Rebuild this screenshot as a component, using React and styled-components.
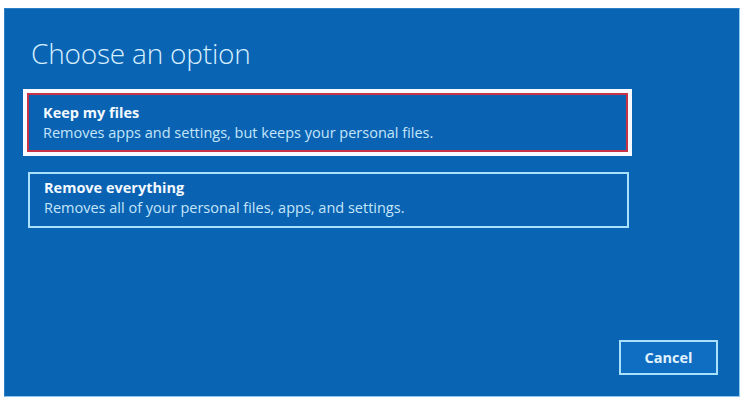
import React from 'react';
import styled, { createGlobalStyle } from 'styled-components';

const GlobalStyle = createGlobalStyle`
  html, body {
    margin: 0;
    background: #ffffff;
  }
  body {
    font-family: "Open Sans", "Noto Sans", "Liberation Sans", sans-serif;
  }
`;

const Page = styled.div`
  box-sizing: border-box;
  width: 743px;
  height: 401px;
  padding: 8px 3px 4px 4px;
`;

const Panel = styled.div`
  box-sizing: border-box;
  width: 736px;
  height: 389px;
  background: #0a64b4;
  border: 1px solid #8ccaf0;
  border-left-color: #2f7fc6;
  border-top-color: #2f7fc6;
  display: flex;
  flex-direction: column;
  padding: 0 21px 21px 22px;
`;

const Title = styled.h1`
  margin: 28px 0 0 4px;
  font-size: 28px;
  line-height: 32px;
  font-weight: 300;
  color: #d6efff;
  letter-spacing: -0.2px;
`;

const Options = styled.div`
  display: flex;
  flex-direction: column;
  gap: 20px;
  margin-top: 24px;
`;

const Option = styled.button`
  box-sizing: border-box;
  width: 601px;
  margin-left: ${p => (p.$selected ? '0' : '1px')};
  padding: ${p => (p.$selected ? '8px 0 7px 14px' : '4px 0 8px 14px')};
  background: #0a62b2;
  border: ${p => (p.$selected ? '2px solid #c63346' : '2px solid #a9e0fb')};
  box-shadow: ${p => (p.$selected ? '0 0 0 4px #f7fbff' : 'none')};
  text-align: left;
  font-family: inherit;
  cursor: pointer;
`;

const OptionTitle = styled.div`
  font-size: 14.5px;
  line-height: 20px;
  font-weight: 700;
  color: #f2f9ff;
`;

const OptionText = styled.div`
  font-size: 14.5px;
  line-height: 20px;
  color: #c4e6fb;
`;

const Footer = styled.div`
  margin-top: auto;
  display: flex;
  justify-content: flex-end;
`;

const CancelButton = styled.button`
  box-sizing: border-box;
  width: 99px;
  height: 35px;
  background: #0f6ec2;
  border: 2px solid #a9e0fb;
  color: #e2f3ff;
  font-family: inherit;
  font-size: 14.5px;
  font-weight: 700;
  cursor: pointer;
`;

const options = [
  {
    id: 'keep',
    title: 'Keep my files',
    text: 'Removes apps and settings, but keeps your personal files.',
    selected: true,
  },
  {
    id: 'remove',
    title: 'Remove everything',
    text: 'Removes all of your personal files, apps, and settings.',
  },
];

const App = () => (
  <Page>
    <GlobalStyle />
    <Panel>
      <Title>Choose an option</Title>
      <Options>
        {options.map(o => (
          <Option key={o.id} $selected={o.selected}>
            <OptionTitle>{o.title}</OptionTitle>
            <OptionText>{o.text}</OptionText>
          </Option>
        ))}
      </Options>
      <Footer>
        <CancelButton>Cancel</CancelButton>
      </Footer>
    </Panel>
  </Page>
);

export default App;
